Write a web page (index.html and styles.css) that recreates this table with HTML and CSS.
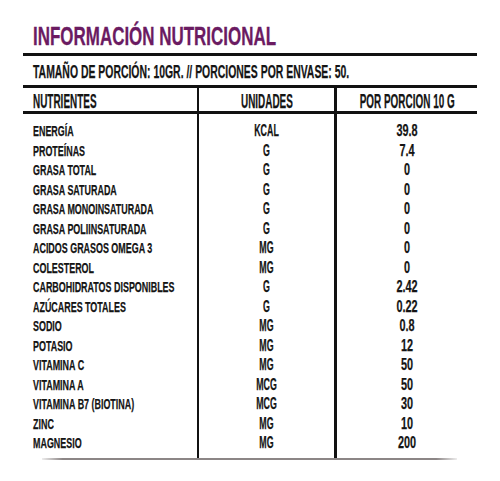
FILE: index.html
```html
<!DOCTYPE html>
<html lang="es">
<head>
<meta charset="utf-8">
<title>Información nutricional</title>
<link rel="stylesheet" href="styles.css">
</head>
<body>
<div class="label">
  <h1 class="title"><span class="squeeze">INFORMACIÓN NUTRICIONAL</span></h1>
  <div class="serving"><span class="squeeze">TAMAÑO DE PORCIÓN: 10GR. // PORCIONES POR ENVASE: 50.</span></div>
  <div class="grid head">
    <div class="cell name"><span class="squeeze">NUTRIENTES</span></div>
    <div class="cell unit"><span class="squeeze">UNIDADES</span></div>
    <div class="cell val"><span class="squeeze">POR PORCION 10 G</span></div>
  </div>
  <div class="grid body">
    <ul class="col name">
      <li>ENERGÍA</li>
      <li>PROTEÍNAS</li>
      <li>GRASA TOTAL</li>
      <li>GRASA SATURADA</li>
      <li>GRASA MONOINSATURADA</li>
      <li>GRASA POLIINSATURADA</li>
      <li>ACIDOS GRASOS OMEGA 3</li>
      <li>COLESTEROL</li>
      <li>CARBOHIDRATOS DISPONIBLES</li>
      <li>AZÚCARES TOTALES</li>
      <li>SODIO</li>
      <li>POTASIO</li>
      <li>VITAMINA C</li>
      <li>VITAMINA A</li>
      <li>VITAMINA B7 (BIOTINA)</li>
      <li>ZINC</li>
      <li>MAGNESIO</li>
    </ul>
    <ul class="col unit">
      <li>KCAL</li>
      <li>G</li>
      <li>G</li>
      <li>G</li>
      <li>G</li>
      <li>G</li>
      <li>MG</li>
      <li>MG</li>
      <li>G</li>
      <li>G</li>
      <li>MG</li>
      <li>MG</li>
      <li>MG</li>
      <li>MCG</li>
      <li>MCG</li>
      <li>MG</li>
      <li>MG</li>
    </ul>
    <ul class="col val">
      <li>39.8</li>
      <li>7.4</li>
      <li>0</li>
      <li>0</li>
      <li>0</li>
      <li>0</li>
      <li>0</li>
      <li>0</li>
      <li>2.42</li>
      <li>0.22</li>
      <li>0.8</li>
      <li>12</li>
      <li>50</li>
      <li>50</li>
      <li>30</li>
      <li>10</li>
      <li>200</li>
    </ul>
  </div>
  <div class="bottom-rule"></div>
</div>
</body>
</html>
```
FILE: styles.css
```css
* { box-sizing: border-box; }
html, body { margin: 0; padding: 0; background: #fff; }
body {
  font-family: "Liberation Sans", Arial, sans-serif;
  font-weight: bold;
  color: #141414;
  width: 500px;
  height: 481px;
  overflow: hidden;
  -webkit-text-stroke: 0.25px #141414;
}
.label {
  padding: 21px 23px 0 23px;
}
.squeeze {
  display: inline-block;
  white-space: nowrap;
  transform-origin: left center;
}
.title {
  margin: 0 0 2px 10px;
  font-size: 26.5px;
  line-height: 30px;
  font-weight: bold;
  color: #6b1b62;
  -webkit-text-stroke: 0.3px #6b1b62;
  white-space: nowrap;
}
.title .squeeze { transform: scaleX(0.64); }
.serving {
  border-top: 3px solid #111;
  border-bottom: 3px solid #111;
  height: 35px;
  padding: 5.5px 0 0 10px;
  font-size: 17.7px;
  line-height: 20px;
  white-space: nowrap;
}
.serving .squeeze { transform: scaleX(0.59); }
.grid {
  display: grid;
  grid-template-columns: 176px 138px 140px;
}
.head {
  height: 26px;
  border-bottom: 3px solid #111;
}
.cell {
  display: flex;
  font-size: 19.5px;
  line-height: 22px;
  padding-top: 1.5px;
  white-space: nowrap;
}
.cell .squeeze { transform: scaleX(0.51); }
.cell.unit, .cell.val { justify-content: center; }
.cell.unit .squeeze, .cell.val .squeeze { transform-origin: center center; }
.name { padding-left: 10px; border-right: 2px solid #111; }
.unit { text-align: center; border-right: 3px solid #111; }
.val { text-align: center; }
.col {
  list-style: none;
  margin: 0;
  padding: 7px 0 5.5px 0;
  font-size: 15.4px;
  line-height: 19.5px;
}
.col.name { padding-left: 10px; }
.col.unit, .col.val { font-size: 17px; padding-top: 7px; padding-bottom: 5.5px; }
.col li {
  white-space: nowrap;
  transform: scaleX(0.58);
}
.col.name li { transform-origin: left center; }
.col.unit li { transform: scaleX(0.52); transform-origin: center center; }
.col.val li { transform: scaleX(0.64); transform-origin: center center; }
.bottom-rule {
  margin: 0 0 0 19px;
  width: 415px;
  height: 2px;
  background: linear-gradient(to right, rgba(140,134,134,0.15), #8c8686 5%, #8c8686 95%, rgba(140,134,134,0.15));
}
```
